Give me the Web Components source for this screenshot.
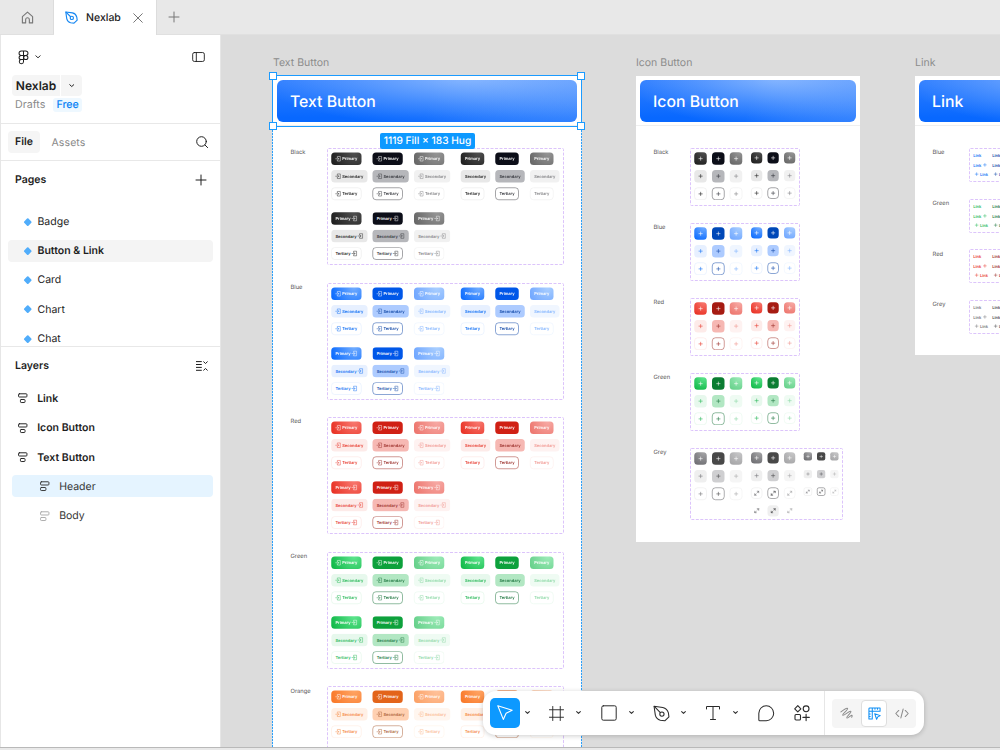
<!DOCTYPE html>
<html lang="en">
<head>
<meta charset="UTF-8">
<title>Nexlab</title>
<style>
    html, body {
        margin: 0;
        height: 100%;
        overflow: hidden;
    }
    body {
        font-family: Inter, "Liberation Sans", sans-serif;
        font-size: 10.5px;
        color: #1e1e1e;
        text-rendering: geometricPrecision;
    }
</style>
</head>
<body>
<design-app></design-app>

<script>
// stroke icons, drawn on their own view boxes
const ICONS = {
    home: ['0 0 14 14', '<path d="M1.5 6 7 1.2 12.5 6v6.8H9V9.3a2 2 0 0 0-4 0v3.5H1.5z"/>'],
    pen: ['0 0 16 16', '<path d="M1 1.2 9.2 2.3c2.6.6 4.6 2.5 5.3 5.2l.5 3.7-3.9 3.7-4.2-.5c-2.4-.6-4.1-2.4-4.7-4.8z"/><path d="m1.2 1.4 5.7 5.7"/><circle cx="8.4" cy="8.5" r="2"/>'],
    close: ['0 0 10 10', '<path d="m.7.7 8.6 8.6M9.3.7.7 9.3"/>'],
    plus: ['0 0 10 10', '<path d="M5 0v10M0 5h10"/>'],
    figma: ['0 0 12 16', '<path d="M6 1H3.5a2.3 2.3 0 0 0 0 4.7H6zM6 1h2.500a2.3 2.3 0 0 1 0 4.7H6zM6 5.7H3.5a2.3 2.3 0 0 0 0 4.6H6zM6 10.3H3.5A2.3 2.3 0 1 0 6 12.7z"/><circle cx="8.5" cy="8" r="2.3"/>'],
    chevron: ['0 0 6 4', '<path d="m.8.8 2.2 2 2.2-2"/>'],
    panel: ['0 0 14 11', '<rect x=".6" y=".6" width="12.8" height="9.8" rx="1.8"/><path d="M4.6.6v9.8"/>'],
    search: ['0 0 12 12', '<circle cx="5.5" cy="5.5" r="4.8"/><path d="m9 9 2.6 2.6"/>'],
    collapse: ['0 0 12 10', '<path d="M.4.6h5M.4 3.5h5M.4 6.4h5M.4 9.3h5M7.7.8l1.8 1.7L11.3.8M7.7 9.2l1.8-1.7 1.8 1.7"/>'],
    stackCenter: ['0 0 10 11', '<rect x=".6" y=".8" width="8.8" height="3.4" rx=".8"/><rect x="2.6" y="6.8" width="4.8" height="3.2" rx=".8"/>'],
    stackLeft: ['0 0 10 11', '<rect x=".6" y=".8" width="8.8" height="3.4" rx=".8"/><rect x=".6" y="6.8" width="5.6" height="3.2" rx=".8"/>'],
    cursor: ['0 0 16 16', '<path d="m.8.8 14.4 4.4-6.1 3-2.8 6.2z"/>'],
    frame: ['0 0 16 16', '<path d="M4 .5v15M12 .5v15M.5 4h15M.5 12h15"/>'],
    rect: ['0 0 16 16', '<rect x=".8" y=".8" width="14.4" height="14.4" rx="1.5"/>'],
    text: ['0 0 16 16', '<path d="M1.5 4V1.5h13V4M8 1.5v13M5.5 14.5h5"/>'],
    comment: ['0 0 16 16', '<path d="M8 .8a7.2 7.2 0 1 1 0 14.4H1.8a1 1 0 0 1-1-1V8A7.2 7.2 0 0 1 8 .8z"/>'],
    actions: ['0 0 16 16', '<path d="m3.8.7 3.1 3.1-3.1 3.1L.7 3.8z"/><circle cx="12.1" cy="3.8" r="2.9"/><rect x="1" y="9.5" width="5.5" height="5.5" rx="1"/><path d="M12.1 9.2v6.4M8.9 12.4h6.4"/>'],
    draw: ['0 0 14 14', '<path d="M1 5.3C3.8 3 7.3.6 8.2 1.5 9.2 2.7 2 7.8 3 8.9c1 1 7.5-5.3 8.7-4.2 1.1 1.1-5.3 6-4.3 7.1.8.9 3.4-2 4.6-2.7 1.3-.7 1.3.7.6 1.9"/>'],
    design: ['0 0 14 14', '<path d="M1 13V2q0-1 1-1h11v3.6H4.6V13zM1 4.600h3.6V1M7.500 1v1.4M10.200 1v1.4M1 7.600h1.400M1 10.200h1.400"/><path d="m7.2 7.2 6 2.1-2.6 1.3-1.3 2.6z"/>'],
    code: ['0 0 16 12', '<path d="M4.3 2.5.9 6l3.4 3.5M11.7 2.5 15.1 6l-3.4 3.5M9.3 1 6.7 11"/>'],
    enter: ['0 0 12 12', '<path d="M4 3.5V1h6.5v10H4V8.5M.5 6H7M5.2 4 7.2 6l-2 2"/>'],
    expand: ['0 0 10 10', '<path d="M6 1h3v3M9 1 6.3 3.7M4 9H1V6M1 9l2.7-2.7"/>']
};

// n = normal, h = hover, d = disabled. Each: primary, secondary bg, ink, border
const PALETTES = {
    Black: {
        n: ['radial-gradient(circle at 75% 0, #505050, #202020 90%)', '#e8e8e8', '#242424', '#e4e4e4'],
        h: ['#0c0e18', '#b6b7bb', '#34363c', '#4c4d52'],
        d: ['radial-gradient(circle at 75% 0, #969696, #686868 90%)', '#f1f1f1', '#858588', '#ebebeb']
    },
    Blue: {
        n: ['radial-gradient(circle at 75% 0, #72adff, #0e6dff 90%)', '#e7f0ff', '#1673f5', '#dbe8ff'],
        h: ['#0057e8', '#adcbff', '#164caa', '#164caa'],
        d: ['radial-gradient(circle at 75% 0, #aacfff, #72a8ff 90%)', '#f0f6ff', '#83b5ff', '#e6f0ff'],
        deep: '#0048b8'
    },
    Red: {
        n: ['radial-gradient(circle at 75% 0, #f87970, #e93326 90%)', '#fdebe9', '#e84034', '#fcdfdc'],
        h: ['#d02014', '#f6b8b3', '#9c302b', '#a2342d'],
        d: ['radial-gradient(circle at 75% 0, #f7aaa5, #ed776f 90%)', '#fef2f1', '#f19993', '#fde9e7'],
        deep: '#a61b12'
    },
    Green: {
        n: ['radial-gradient(circle at 75% 0, #5fe58e, #13ba4b 90%)', '#e7f8ed', '#2cba5b', '#d8f4e1'],
        h: ['#0da13c', '#b2e7c3', '#227943', '#227943'],
        d: ['radial-gradient(circle at 75% 0, #9debb8, #68d18c 90%)', '#effbf3', '#8ed9a7', '#e3f7e9'],
        deep: '#0b7d32'
    },
    Orange: {
        n: ['radial-gradient(circle at 75% 0, #ffa464, #f9792a 90%)', '#fff0e6', '#f58843', '#ffe7d8'],
        h: ['#e3641a', '#ffd0b1', '#ad633a', '#ad633a'],
        d: ['radial-gradient(circle at 75% 0, #ffc29b, #fba268 90%)', '#fff6ef', '#fbbd96', '#fff0e4']
    },
    Grey: {
        n: ['radial-gradient(circle at 75% 0, #a5a5a7, #6f6f73 90%)', '#efefef', '#77777a', '#e7e7e7'],
        h: ['#484848', '#cfcfd1', '#4d4d50', '#5b5b5e'],
        d: ['radial-gradient(circle at 75% 0, #c7c7c8, #a6a6a8 90%)', '#f5f5f5', '#ababad', '#ededed'],
        deep: '#484848'
    }
};

const KINDS = ['primary', 'secondary', 'tertiary'];
const STATES = ['n', 'h', 'd'];

// css background / ink / border for one swatch
function skin(color, kind, state, deep) {
    const p = PALETTES[color];
    const [fill, soft, ink, line] = p[state];
    if (kind === 'primary') {
        return `--bg:${deep && state === 'h' && p.deep ? p.deep : fill};--ink:#fff;--line:transparent`;
    }
    if (kind === 'secondary') {
        return `--bg:${soft};--ink:${ink};--line:transparent`;
    }
    return `--bg:#fff;--ink:${ink};--line:${line}`;
}

class UiIcon extends HTMLElement {
    connectedCallback() {
        this.attachShadow({ mode: 'open' });
        const [box, shapes] = ICONS[this.getAttribute('name')];
        const w = this.getAttribute('w');
        const h = this.getAttribute('h') || w;
        const stroke = this.getAttribute('stroke') || 1;
        this.shadowRoot.innerHTML = `
            <style>
                :host { display: block; flex: none; width: ${w}px; height: ${h}px; }
                svg { display: block; width: 100%; height: 100%; overflow: visible; }
            </style>
            <svg viewBox="${box}" fill="none" stroke="currentColor" stroke-width="${stroke}"
                stroke-linecap="round" stroke-linejoin="round">${shapes}</svg>
        `;
    }
}
customElements.define('ui-icon', UiIcon);

class TabBar extends HTMLElement {
    connectedCallback() {
        this.attachShadow({ mode: 'open' });
        this.shadowRoot.innerHTML = `
            <style>
                :host {
                    display: flex;
                    height: 35px;
                    box-sizing: border-box;
                    background: #e8e8e8;
                    border-bottom: 1px solid #e0e0e0;
                    color: #777;
                }
                .home {
                    width: 54px;
                    padding-left: 1px;
                    box-sizing: border-box;
                    display: grid;
                    place-items: center;
                    border-right: 1px solid #dcdcdc;
                }
                .tab {
                    width: 103px;
                    height: 35px;
                    box-sizing: border-box;
                    padding: 0 13px 0 11px;
                    display: flex;
                    align-items: center;
                    background: #fff;
                    border-right: 1px solid #dcdcdc;
                }
                .tab span {
                    margin-left: 8px;
                    flex: 1;
                    color: #222;
                    font-weight: 500;
                }
                .new { margin: 12px 0 0 12px; }
            </style>
            <div class="home"><ui-icon name="home" w="13" stroke="1.2"></ui-icon></div>
            <div class="tab">
                <ui-icon name="pen" w="13" stroke="1.4" style="color:#1687f2"></ui-icon>
                <span>Nexlab</span>
                <ui-icon name="close" w="10"></ui-icon>
            </div>
            <ui-icon class="new" name="plus" w="10"></ui-icon>
        `;
    }
}
customElements.define('tab-bar', TabBar);

class PageRow extends HTMLElement {
    connectedCallback() {
        this.attachShadow({ mode: 'open' });
        this.shadowRoot.innerHTML = `
            <style>
                :host {
                    display: flex;
                    align-items: center;
                    height: 22px;
                    margin: 0 7px 7.3px;
                    padding-left: 16px;
                    border-radius: 4px;
                    flex: none;
                }
                :host([active]) { background: #f4f4f4; font-weight: 600; }
                i {
                    width: 5.5px;
                    height: 5.5px;
                    margin: 0 7px 0 1px;
                    border-radius: 1px;
                    background: #50adfb;
                    transform: rotate(45deg);
                }
            </style>
            <i></i><slot></slot>
        `;
    }
}
customElements.define('page-row', PageRow);

class LayerRow extends HTMLElement {
    connectedCallback() {
        this.attachShadow({ mode: 'open' });
        const nested = this.hasAttribute('nested');
        this.shadowRoot.innerHTML = `
            <style>
                :host {
                    display: flex;
                    align-items: center;
                    gap: 9.7px;
                    height: 22px;
                    margin: 0 7px 7.3px 11px;
                    padding-left: 6px;
                    border-radius: 4px;
                    font-weight: 600;
                }
                :host([nested]) { padding-left: 28px; font-weight: 400; color: #333; }
                :host([active]) { background: #e5f4ff; }
                :host([faded]) ui-icon { color: #aaa; }
            </style>
            <ui-icon name="${nested ? 'stackLeft' : 'stackCenter'}" w="9.5" h="10.5"></ui-icon>
            <slot></slot>
        `;
    }
}
customElements.define('layer-row', LayerRow);

class SideBar extends HTMLElement {
    connectedCallback() {
        this.attachShadow({ mode: 'open' });
        this.shadowRoot.innerHTML = `
            <style>
                :host {
                    display: flex;
                    flex-direction: column;
                    width: 221px;
                    box-sizing: border-box;
                    flex: none;
                    background: #fff;
                    border-left: 1px solid #e6e6e6;
                    border-right: 1px solid #e6e6e6;
                }
                .file { height: 88px; border-bottom: 1px solid #e8e8e8; }
                .top {
                    display: flex;
                    align-items: center;
                    height: 22px;
                    padding: 11px 15px 0 17px;
                    gap: 6px;
                }
                .top .panel { margin-left: auto; }
                .name {
                    display: flex;
                    gap: 1px;
                    height: 21px;
                    margin: 7px 0 0 11px;
                    font-size: 12px;
                    font-weight: 600;
                }
                .name > * { background: #f5f5f5; display: flex; align-items: center; justify-content: center; }
                .name b { width: 48px; border-radius: 4px 0 0 4px; font-weight: 600; }
                .name div { width: 21px; border-radius: 0 4px 4px 0; }
                .plan {
                    display: flex;
                    align-items: center;
                    gap: 8px;
                    height: 15px;
                    margin: 1px 0 0 14px;
                    font-size: 10.7px;
                    color: #8a8a8a;
                }
                .plan em {
                    font-style: normal;
                    font-weight: 500;
                    color: #0d84f5;
                    background: #eef8ff;
                    border-radius: 3px;
                    padding: 0 3px;
                    line-height: 14px;
                }
                .switch {
                    display: flex;
                    align-items: center;
                    height: 36px;
                    padding: 0 12px 0 7px;
                    border-bottom: 1px solid #e8e8e8;
                }
                .switch b {
                    width: 32px;
                    line-height: 22px;
                    text-align: center;
                    font-weight: 600;
                    background: #f5f5f5;
                    border-radius: 4px;
                }
                .switch span { margin-left: 11.5px; flex: 1; color: #8a8a8a; letter-spacing: .1px; }
                .pages { height: 185px; border-bottom: 1px solid #e8e8e8; overflow: hidden; }
                .head {
                    display: flex;
                    align-items: center;
                    justify-content: space-between;
                    height: 37px;
                    padding: 0 14px;
                    font-weight: 600;
                }
                .pages .head { height: 37.3px; padding-bottom: 12px; }
                .layers .head { margin-bottom: 3.6px; padding-right: 12px; }
            </style>
            <div class="file">
                <div class="top">
                    <ui-icon name="figma" w="11" h="15" stroke="1.1"></ui-icon>
                    <ui-icon name="chevron" w="6" h="4" stroke=".9"></ui-icon>
                    <ui-icon class="panel" name="panel" w="13" h="10"></ui-icon>
                </div>
                <div class="name"><b>Nexlab</b><div><ui-icon name="chevron" w="5.5" h="3.6" stroke="1.1"></ui-icon></div></div>
                <div class="plan">Drafts <em>Free</em></div>
            </div>
            <div class="switch"><b>File</b><span>Assets</span><ui-icon name="search" w="12"></ui-icon></div>
            <div class="pages">
                <div class="head">Pages <ui-icon name="plus" w="10"></ui-icon></div>
                <page-row>Badge</page-row>
                <page-row active>Button &amp; Link</page-row>
                <page-row>Card</page-row>
                <page-row>Chart</page-row>
                <page-row>Chat</page-row>
            </div>
            <div class="layers">
                <div class="head">Layers <ui-icon name="collapse" w="12" h="10"></ui-icon></div>
                <layer-row>Link</layer-row>
                <layer-row>Icon Button</layer-row>
                <layer-row>Text Button</layer-row>
                <layer-row nested active>Header</layer-row>
                <layer-row nested faded>Body</layer-row>
            </div>
        `;
    }
}
customElements.define('side-bar', SideBar);

class CanvasFrame extends HTMLElement {
    connectedCallback() {
        this.attachShadow({ mode: 'open' });
        const name = this.getAttribute('name');
        this.shadowRoot.innerHTML = `
            <style>
                :host { display: block; position: absolute; }
                .label { height: 20px; line-height: 13px; color: #8c8c8c; }
                .sheet { height: calc(100% - 20px); background: #fff; }
                .header { height: 50px; padding: 4px; box-sizing: border-box; border-bottom: 1px solid #efefef; }
                .banner {
                    height: 42px;
                    box-sizing: border-box;
                    padding-left: 13px;
                    display: flex;
                    align-items: center;
                    border-radius: 6px;
                    background:
                        radial-gradient(ellipse 70% 120% at 63% -8%, rgba(190,218,255,.6), rgba(190,218,255,.25) 55%, transparent),
                        linear-gradient(100deg, transparent 50%, rgba(255,255,255,.18)),
                        linear-gradient(to top, #0868ff 10%, #2f7eff);
                    color: #fff;
                    font-size: 15.8px;
                    font-weight: 500;
                }
                .body { padding: 22px 0 0 17px; }
            </style>
            <div class="label">${name}</div>
            <div class="sheet">
                <div class="header"><div class="banner">${name}</div></div>
                <div class="body"><slot></slot></div>
            </div>
        `;
    }
}
customElements.define('canvas-frame', CanvasFrame);

// a colour name on the left and a dashed component set on the right
class VariantSet extends HTMLElement {
    connectedCallback() {
        this.attachShadow({ mode: 'open' });
        this.shadowRoot.innerHTML = `
            <style>
                :host { display: flex; }
                .label {
                    width: 36.5px;
                    padding: 1.4px 0 0 .5px;
                    box-sizing: border-box;
                    flex: none;
                    font-size: 5.8px;
                    line-height: 8px;
                    color: #555;
                }
                .set { flex: none; position: relative; }
                .outline { display: block; position: absolute; inset: 0; width: 100%; height: 100%; }
            </style>
            <div class="label">${this.getAttribute('label')}</div>
            <div class="set">
                <svg class="outline"><rect x=".5" y=".5" rx="1" style="width:calc(100% - 1px);height:calc(100% - 1px)"
                    fill="none" stroke="#dcc4fb" stroke-dasharray="3 1.5"/></svg>
                <slot></slot>
            </div>
        `;
    }
}
customElements.define('variant-set', VariantSet);

// the swatches are laid out at full size, the matrix shows them at 25%
const SCALE = 4;

class MiniButton extends HTMLElement {
    connectedCallback() {
        this.attachShadow({ mode: 'open' });
        const kind = this.getAttribute('kind');
        const side = this.getAttribute('icon');
        const icon = '<ui-icon name="enter" w="22" stroke="1"></ui-icon>';
        const width = (kind === 'secondary' ? 118 : 94) + (side === 'none' ? 0 : 27);
        this.shadowRoot.innerHTML = `
            <style>
                :host {
                    ${skin(this.getAttribute('color'), kind, this.getAttribute('state'))};
                    display: flex;
                    align-items: center;
                    justify-content: center;
                    gap: 5px;
                    width: ${width}px;
                    height: 50px;
                    box-sizing: border-box;
                    border-radius: 14px;
                    border: ${kind === 'tertiary' ? '2px solid var(--line)' : '0'};
                    background: var(--bg);
                    color: var(--ink);
                    font-size: 16px;
                    line-height: 24px;
                    font-weight: 600;
                    white-space: nowrap;
                }
            </style>
            ${side === 'left' ? icon : ''}<span>${kind[0].toUpperCase() + kind.slice(1)}</span>${side === 'right' ? icon : ''}
        `;
    }
}
customElements.define('mini-button', MiniButton);

class ButtonMatrix extends HTMLElement {
    connectedCallback() {
        this.attachShadow({ mode: 'open' });
        const color = this.getAttribute('color');
        const cell = (kind, state, icon, col) =>
            `<mini-button color="${color}" kind="${kind}" state="${state}" icon="${icon}" style="grid-column:${col}"></mini-button>`;
        let cells = '';
        KINDS.forEach(kind => {
            STATES.forEach((s, i) => cells += cell(kind, s, 'left', i + 1));
            STATES.forEach((s, i) => cells += cell(kind, s, 'none', i + 4));
        });
        if (!this.hasAttribute('short')) {
            KINDS.forEach(kind => {
                STATES.forEach((s, i) => cells += cell(kind, s, 'right', i + 1));
            });
        }
        this.shadowRoot.innerHTML = `
            <style>
                :host { display: block; width: 237px; height: 117px; }
                .grid {
                    display: grid;
                    grid-template-columns: 165px 166px 187px 138px 139px 1fr;
                    grid-template-rows: 70px 70px 99px 70px 70px 50px;
                    width: ${237 * SCALE}px;
                    height: ${117 * SCALE}px;
                    box-sizing: border-box;
                    padding: 18px 0 0 17px;
                    transform: scale(${1 / SCALE});
                    transform-origin: 0 0;
                }
            </style>
            <div class="grid">${cells}</div>
        `;
    }
}
customElements.define('button-matrix', ButtonMatrix);

class IconTile extends HTMLElement {
    connectedCallback() {
        this.attachShadow({ mode: 'open' });
        const size = Number(this.getAttribute('size'));
        const kind = this.getAttribute('kind');
        const glyph = this.getAttribute('glyph') || 'plus';
        const g = glyph === 'plus' ? (size > 40 ? 13 : 10) : size * .44;
        this.shadowRoot.innerHTML = `
            <style>
                :host {
                    ${skin(this.getAttribute('color'), kind, this.getAttribute('state'), true)};
                    display: grid;
                    place-items: center;
                    width: ${size}px;
                    height: ${size}px;
                    box-sizing: border-box;
                    border-radius: ${size > 40 ? 14 : 8}px;
                    border: ${kind === 'tertiary' ? '2px solid var(--line)' : '0'};
                    background: var(--bg);
                    color: var(--ink);
                }
                :host([bare]) { border: 0; background: none; }
                :host([bare][state="h"]) { background: #efefef; }
            </style>
            <ui-icon name="${glyph}" w="${g}" stroke="${glyph === 'plus' ? 1.8 : 1.4}"></ui-icon>
        `;
    }
}
customElements.define('icon-tile', IconTile);

class TileMatrix extends HTMLElement {
    connectedCallback() {
        this.attachShadow({ mode: 'open' });
        const color = this.getAttribute('color');
        const grey = color === 'Grey';
        const width = grey ? 153 : 110;
        const height = grey ? 72 : 58;
        const sizes = grey ? [50, 45, 33] : [50, 45];
        let cells = '';
        KINDS.forEach((kind, row) => {
            sizes.forEach((size, set) => {
                STATES.forEach((state, i) => {
                    const glyph = grey && row === 2 && set > 0 ? 'expand' : 'plus';
                    cells += `<icon-tile color="${color}" kind="${kind}" state="${state}" size="${size}" glyph="${glyph}"
                        style="grid-column:${set * 3 + i + 1};grid-row:${row + 1}"></icon-tile>`;
                });
            });
        });
        if (grey) {
            STATES.forEach((state, i) => {
                cells += `<icon-tile bare color="Grey" kind="tertiary" state="${state}" size="45" glyph="expand"
                    style="grid-column:${i + 4};grid-row:4"></icon-tile>`;
            });
        }
        this.shadowRoot.innerHTML = `
            <style>
                :host { display: block; width: ${width}px; height: ${height}px; }
                .grid {
                    display: grid;
                    grid-template-columns: 71px 71px 85px 66px 66px 79px 53px 53px 36px;
                    grid-auto-rows: 70.5px;
                    width: ${width * SCALE}px;
                    height: ${height * SCALE}px;
                    box-sizing: border-box;
                    padding: 17px 0 0 17px;
                    transform: scale(${1 / SCALE});
                    transform-origin: 0 0;
                }
            </style>
            <div class="grid">${cells}</div>
        `;
    }
}
customElements.define('tile-matrix', TileMatrix);

class LinkMatrix extends HTMLElement {
    connectedCallback() {
        this.attachShadow({ mode: 'open' });
        const p = PALETTES[this.getAttribute('color')];
        const plus = '<ui-icon name="plus" w="11" stroke="1.7"></ui-icon>';
        const column = state => `
            <div style="color:${p[state][2]}">
                <p>Link</p>
                <p>Link ${plus}</p>
                <p class="lead">${plus} Link</p>
            </div>`;
        this.shadowRoot.innerHTML = `
            <style>
                :host { display: block; width: 70px; height: 34px; }
                .grid {
                    display: flex;
                    width: ${70 * SCALE}px;
                    box-sizing: border-box;
                    padding: 12px 0 0 17px;
                    font-size: 16px;
                    font-weight: 600;
                    transform: scale(${1 / SCALE});
                    transform-origin: 0 0;
                }
                .grid > div { width: 76px; }
                p { display: flex; align-items: center; gap: 9px; height: 37px; margin: 0; }
                .lead { padding-left: 8px; gap: 8px; }
            </style>
            <div class="grid">${['n', 'h'].map(column).join('')}</div>
        `;
    }
}
customElements.define('link-matrix', LinkMatrix);

// outline, handles and size tag of the selected header
class SelectionBox extends HTMLElement {
    connectedCallback() {
        this.attachShadow({ mode: 'open' });
        this.shadowRoot.innerHTML = `
            <style>
                :host {
                    display: block;
                    position: absolute;
                    box-sizing: border-box;
                    border: 1px solid #1b9bff;
                }
                i {
                    position: absolute;
                    width: 8px;
                    height: 8px;
                    box-sizing: border-box;
                    background: #fff;
                    border: 1px solid #1b9bff;
                }
                .tl { left: -4px; top: -4px; }
                .tr { right: -4px; top: -4px; }
                .bl { left: -4px; bottom: -4px; }
                .br { right: -4px; bottom: -4px; }
                span {
                    position: absolute;
                    top: calc(100% + 7px);
                    left: 107px;
                    width: 95px;
                    line-height: 16px;
                    text-align: center;
                    border-radius: 2px;
                    background: #0d99ff;
                    color: #fff;
                    font-size: 10.2px;
                    font-weight: 500;
                    white-space: nowrap;
                }
            </style>
            <i class="tl"></i><i class="tr"></i><i class="bl"></i><i class="br"></i>
            <span>1119 Fill × 183 Hug</span>
        `;
    }
}
customElements.define('selection-box', SelectionBox);

class ToolBar extends HTMLElement {
    connectedCallback() {
        this.attachShadow({ mode: 'open' });
        const chevron = '<ui-icon name="chevron" w="5" h="3.4" stroke="1.3"></ui-icon>';
        this.shadowRoot.innerHTML = `
            <style>
                :host {
                    display: flex;
                    align-items: center;
                    box-sizing: border-box;
                    position: absolute;
                    padding: 0 7px;
                    background: #fff;
                    border-radius: 13px;
                    box-shadow: 0 1px 5px rgba(0,0,0,.2);
                    color: #2a2a2a;
                }
                .tool { display: flex; align-items: center; flex: none; }
                .tool > ui-icon:first-child { margin-right: 12px; }
                .active {
                    width: 30px;
                    height: 30px;
                    margin-right: 5px;
                    display: grid;
                    place-items: center;
                    border-radius: 5px;
                    background: #0d99ff;
                    color: #fff;
                }
                .first { width: 59px; }
                .slot { width: 52px; }
                .modes {
                    display: flex;
                    align-items: center;
                    height: 29px;
                    width: 84px;
                    margin-left: 7px;
                    border-radius: 4px;
                    background: #f5f5f5;
                    color: #8b8b8b;
                }
                .modes > * { flex: 1; display: grid; place-items: center; }
                .modes .on {
                    flex: none;
                    width: 26px;
                    height: 27px;
                    box-sizing: border-box;
                    background: #fff;
                    border: 1px solid #dedede;
                    border-radius: 4px;
                    color: #0d8ef5;
                }
                .rule { width: 1px; height: 100%; background: #e6e6e6; margin-left: 14px; }
            </style>
            <div class="tool first"><div class="active"><ui-icon name="cursor" w="16" stroke="1.1"></ui-icon></div>${chevron}</div>
            <div class="tool slot"><ui-icon name="frame" w="15"></ui-icon>${chevron}</div>
            <div class="tool slot"><ui-icon name="rect" w="16"></ui-icon>${chevron}</div>
            <div class="tool slot"><ui-icon name="pen" w="17" style="margin-right:11px"></ui-icon>${chevron}</div>
            <div class="tool slot" style="width:53px"><ui-icon name="text" w="16"></ui-icon>${chevron}</div>
            <div class="tool" style="width:36px"><ui-icon name="comment" w="16.5"></ui-icon></div>
            <ui-icon name="actions" w="16" stroke="1.1"></ui-icon>
            <div class="rule"></div>
            <div class="modes">
                <div><ui-icon name="draw" w="13" stroke="1.1"></ui-icon></div>
                <div class="on"><ui-icon name="design" w="13" stroke="1.1"></ui-icon></div>
                <div><ui-icon name="code" w="14" h="11" stroke="1.2"></ui-icon></div>
            </div>
        `;
    }
}
customElements.define('tool-bar', ToolBar);

class DesignApp extends HTMLElement {
    connectedCallback() {
        this.attachShadow({ mode: 'open' });
        // the Orange set runs under the toolbar, only its first rows are in view
        const sets = (names, tag) => names.map(c =>
            `<variant-set label="${c}"><${tag} color="${c}" ${c === 'Orange' ? 'short' : ''}></${tag}></variant-set>`).join('');
        this.shadowRoot.innerHTML = `
            <style>
                :host { display: flex; flex-direction: column; height: 100vh; }
                .work { flex: 1; min-height: 0; display: flex; }
                .canvas { flex: 1; position: relative; overflow: hidden; background: #dcdcdc; }
                .text { left: 52px; top: 21px; width: 308px; height: 760px; }
                .icon { left: 415px; top: 21px; width: 224px; height: 486px; }
                .link { left: 694px; top: 21px; width: 260px; height: 299px; }
                .text variant-set { margin-bottom: 17.55px; }
                .icon variant-set { margin-bottom: 17px; }
                .link variant-set { margin-bottom: 16.7px; }
                .parent {
                    position: absolute;
                    left: 51px;
                    top: 41px;
                    width: 308px;
                    height: 760px;
                    border: 1px solid transparent;
                    border-width: 0 1px;
                    background:
                        repeating-linear-gradient(#2c9ff8 0 2px, #cfe9fe 2px 3px) left / 1px 100% no-repeat border-box,
                        repeating-linear-gradient(#2c9ff8 0 2px, #cfe9fe 2px 3px) right / 1px 100% no-repeat border-box;
                }
                selection-box { left: 51px; top: 40px; width: 310px; height: 52px; }
                tool-bar { left: 262px; top: 656px; width: 441px; height: 44px; }
                .edge { height: 2px; background: #e9e9e9; border-top: 1px solid #b9b9b9; }
            </style>
            <tab-bar></tab-bar>
            <div class="work">
                <side-bar></side-bar>
                <div class="canvas">
                    <canvas-frame class="text" name="Text Button">${sets(['Black', 'Blue', 'Red', 'Green', 'Orange'], 'button-matrix')}</canvas-frame>
                    <canvas-frame class="icon" name="Icon Button">${sets(['Black', 'Blue', 'Red', 'Green', 'Grey'], 'tile-matrix')}</canvas-frame>
                    <canvas-frame class="link" name="Link">${sets(['Blue', 'Green', 'Red', 'Grey'], 'link-matrix')}</canvas-frame>
                    <div class="parent"></div>
                    <selection-box></selection-box>
                    <tool-bar></tool-bar>
                </div>
            </div>
            <div class="edge"></div>
        `;
    }
}
customElements.define('design-app', DesignApp);
</script>
</body>
</html>
